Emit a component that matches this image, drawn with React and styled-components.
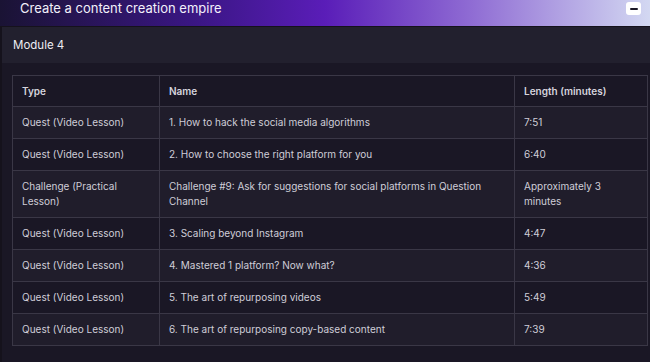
import React from "react";
import styled, { createGlobalStyle } from "styled-components";

const Global = createGlobalStyle`
  html, body { margin: 0; padding: 0; background: #15121c; }
  body { font-family: Inter, "Open Sans", sans-serif; width: 650px; height: 362px; overflow: hidden; }
`;

const Page = styled.div`
  width: 650px;
  height: 362px;
  display: flex;
  flex-direction: column;
  background: #15121c;
`;

const Header = styled.div`
  height: 26px;
  flex: none;
  display: flex;
  align-items: flex-start;
  justify-content: space-between;
  padding: 0 9px 0 20px;
  background: linear-gradient(90deg, #1a1334 0%, #3a1684 30%, #5a1db8 50%, #8e6ad3 72%, #d3d8f2 100%);
`;

const Title = styled.h1`
  margin: 0;
  font-size: 13px;
  font-weight: 400;
  line-height: 16px;
  color: #f2f0fa;
`;

const Toggle = styled.button`
  margin-top: 2px;
  width: 15px;
  height: 13px;
  padding: 0;
  border: none;
  border-radius: 3px;
  background: #ffffff;
  display: flex;
  align-items: center;
  justify-content: center;
  &::before {
    content: "";
    width: 8px;
    height: 2px;
    border-radius: 1px;
    background: #1b1826;
  }
`;

const Panel = styled.section`
  flex: 1;
  margin-left: 2px;
  margin-top: 1px;
  display: flex;
  flex-direction: column;
  background: #1a1725;
`;

const ModuleBar = styled.div`
  height: 36px;
  display: flex;
  align-items: center;
  padding-left: 11px;
  background: #22202e;
  color: #eeedf3;
  font-size: 11.5px;
`;

const Body = styled.div`
  padding: 12px 3px 0 10px;
`;

const Table = styled.table`
  width: 635px;
  border-collapse: collapse;
  table-layout: fixed;
  font-size: 10px;
  color: #cfcdd8;
  border: 1px solid #3a3746;
`;

const Th = styled.th`
  text-align: left;
  font-weight: 600;
  padding: 8px 9px;
  line-height: 14px;
  border: 1px solid #3a3746;
  color: #d6d4de;
`;

const Tr = styled.tr`
  background: ${(p) => (p.$odd ? "#201d2b" : "#1a1725")};
`;

const Td = styled.td`
  padding: 8px 9px;
  line-height: 15px;
  vertical-align: middle;
  border: 1px solid #3a3746;
`;

const rows = [
  ["Quest (Video Lesson)", "1. How to hack the social media algorithms", "7:51"],
  ["Quest (Video Lesson)", "2. How to choose the right platform for you", "6:40"],
  ["Challenge (Practical Lesson)", "Challenge #9: Ask for suggestions for social platforms in Question Channel", "Approximately 3 minutes"],
  ["Quest (Video Lesson)", "3. Scaling beyond Instagram", "4:47"],
  ["Quest (Video Lesson)", "4. Mastered 1 platform? Now what?", "4:36"],
  ["Quest (Video Lesson)", "5. The art of repurposing videos", "5:49"],
  ["Quest (Video Lesson)", "6. The art of repurposing copy-based content", "7:39"],
];

export default function App() {
  return (
    <Page>
      <Global />
      <Header>
        <Title>Create a content creation empire</Title>
        <Toggle aria-label="collapse" />
      </Header>
      <Panel>
        <ModuleBar>Module 4</ModuleBar>
        <Body>
          <Table>
            <colgroup>
              <col style={{ width: 147 }} />
              <col style={{ width: 355 }} />
              <col style={{ width: 133 }} />
            </colgroup>
            <thead>
              <tr>
                <Th>Type</Th>
                <Th>Name</Th>
                <Th>Length (minutes)</Th>
              </tr>
            </thead>
            <tbody>
              {rows.map((r, i) => (
                <Tr key={i} $odd={i % 2 === 0}>
                  <Td>{r[0]}</Td>
                  <Td>{r[1]}</Td>
                  <Td>{r[2]}</Td>
                </Tr>
              ))}
            </tbody>
          </Table>
        </Body>
      </Panel>
    </Page>
  );
}
